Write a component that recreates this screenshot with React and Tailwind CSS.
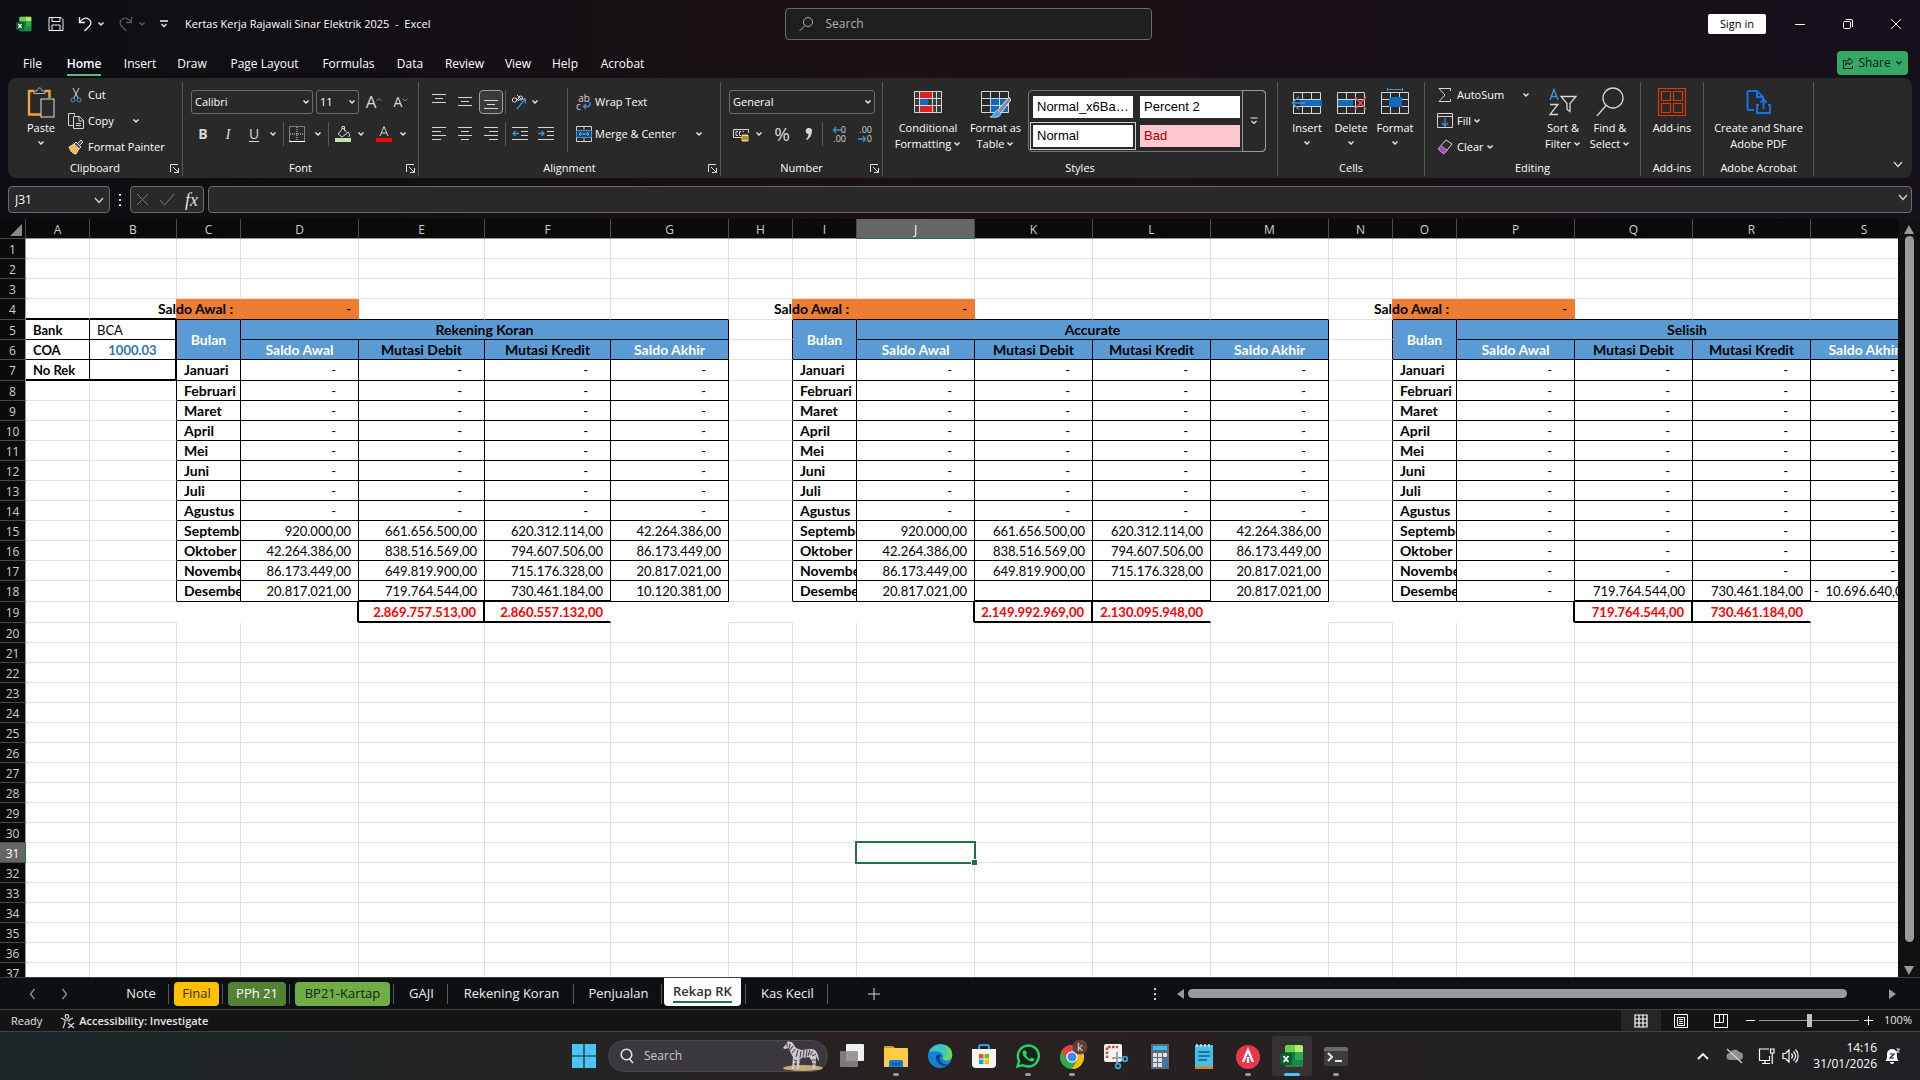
import clsx from "clsx";

const COLUMNS = [
  ["A", "w-[64px]"], ["B", "w-[87px]"], ["C", "w-[64px]"], ["D", "w-[118px]"], ["E", "w-[126px]"],
  ["F", "w-[126px]"], ["G", "w-[118px]"], ["H", "w-[64px]"], ["I", "w-[64px]"], ["J", "w-[118px]"],
  ["K", "w-[118px]"], ["L", "w-[118px]"], ["M", "w-[118px]"], ["N", "w-[64px]"], ["O", "w-[64px]"],
  ["P", "w-[118px]"], ["Q", "w-[118px]"], ["R", "w-[118px]"], ["S", "w-[107px]"],
];

const MONTHS = [
  "Januari", "Februari", "Maret", "April", "Mei", "Juni",
  "Juli", "Agustus", "September", "Oktober", "November", "Desember",
];

const TALL_ROWS = [4, 7, 18, 19];

// start = column index of "Bulan", rows = amounts by sheet row number
const BLOCKS = [
  {
    start: 2,
    title: "Rekening Koran",
    rows: {
      15: ["920.000,00", "661.656.500,00", "620.312.114,00", "42.264.386,00"],
      16: ["42.264.386,00", "838.516.569,00", "794.607.506,00", "86.173.449,00"],
      17: ["86.173.449,00", "649.819.900,00", "715.176.328,00", "20.817.021,00"],
      18: ["20.817.021,00", "719.764.544,00", "730.461.184,00", "10.120.381,00"],
    },
    totals: ["2.869.757.513,00", "2.860.557.132,00"],
  },
  {
    start: 8,
    title: "Accurate",
    rows: {
      15: ["920.000,00", "661.656.500,00", "620.312.114,00", "42.264.386,00"],
      16: ["42.264.386,00", "838.516.569,00", "794.607.506,00", "86.173.449,00"],
      17: ["86.173.449,00", "649.819.900,00", "715.176.328,00", "20.817.021,00"],
      18: ["20.817.021,00", "", "", "20.817.021,00"],
    },
    totals: ["2.149.992.969,00", "2.130.095.948,00"],
  },
  {
    start: 14,
    title: "Selisih",
    rows: {
      18: ["-", "719.764.544,00", "730.461.184,00", "- 10.696.640,00"],
    },
    totals: ["719.764.544,00", "730.461.184,00"],
  },
];

const MENU_TABS = [
  ["File", "w-[43px]"], ["Home", "w-[60px]"], ["Insert", "w-[52px]"], ["Draw", "w-[52px]"],
  ["Page Layout", "w-[93px]"], ["Formulas", "w-[75px]"], ["Data", "w-[48px]"], ["Review", "w-[61px]"],
  ["View", "w-[46px]"], ["Help", "w-[48px]"], ["Acrobat", "w-[67px]"],
];

const SHEET_TABS = [
  { name: "Note", w: "w-[57px]" },
  { name: "Final", w: "w-[54px]", color: "bg-[#ffc000] text-[#3a2c00]" },
  { name: "PPh 21", w: "w-[67px]", color: "bg-[#548235] text-white" },
  { name: "BP21-Kartap", w: "w-[104px]", color: "bg-[#70ad47] text-[#14240a]" },
  { name: "GAJI", w: "w-[54px]" },
  { name: "Rekening Koran", w: "w-[126px]" },
  { name: "Penjualan", w: "w-[88px]" },
  { name: "Rekap RK", w: "w-[84px]", active: true },
  { name: "Kas Kecil", w: "w-[82px]" },
];

/* ---------- small helpers ---------- */

function Svg({ w = 16, h = 16, children, className, ...rest }) {
  return (
    <svg
      width={w}
      height={h}
      viewBox={`0 0 ${w} ${h}`}
      fill="none"
      stroke="#d6d6d6"
      className={clsx("shrink-0", className)}
      aria-hidden="true"
      {...rest}
    >
      {children}
    </svg>
  );
}

function Chevron({ dim, className }) {
  return (
    <Svg w={8} h={6} className={className} stroke={dim ? "#5a5a5a" : "#e6e6e6"} strokeWidth="1.5">
      <path d="M1.5 1.5 4 4l2.500-2.500" />
    </Svg>
  );
}

function BigChevron({ className }) {
  return (
    <Svg w={10} h={7} className={className} stroke="#d6d6d6" strokeWidth="1.3">
      <path d="M1 1l4 4.500L9 1" />
    </Svg>
  );
}

function Divider({ className }) {
  return <span className={clsx("w-px shrink-0 bg-[#5a5a5a]", className)} />;
}

function IconButton({ label, className, children }) {
  return (
    <button type="button" aria-label={label} className={clsx("flex shrink-0 items-center justify-center", className)}>
      {children}
    </button>
  );
}

function Group({ label, width, launcher, children }) {
  return (
    <section className={clsx("mt-1 flex h-[94px] shrink-0 flex-col border-r border-[#565656]", width)}>
      <div className="flex h-[78px]">{children}</div>
      <div className="flex h-4 items-center">
        <span className={clsx("flex-1 whitespace-nowrap text-center", launcher && "pl-4")}>{label}</span>
        {launcher && (
          <IconButton label={`${label} settings`} className="w-4">
            <Svg w={9} h={9} stroke="#e0e0e0">
              <path d="M.5 8V.5H8M3 3l5 5M8.500 4v4.500H4" />
            </Svg>
          </IconButton>
        )}
      </div>
    </section>
  );
}

function BigButton({ icon, lines, chevron, below, width }) {
  const last = lines.length - 1;
  return (
    <button type="button" className={clsx("flex shrink-0 flex-col items-center pt-1", width)}>
      <span className="flex h-8 items-center">{icon}</span>
      <span className="mt-0.5 flex flex-col items-center">
        {lines.map((line, i) => (
          <span key={line} className="flex h-4 items-center gap-0.5 whitespace-nowrap">
            {line}
            {chevron && i === last && <Chevron />}
          </span>
        ))}
      </span>
      {below && <Chevron className="mt-1" />}
    </button>
  );
}

function SmallButton({ icon, label, chevron, far }) {
  return (
    <button type="button" className="flex h-[26px] items-center whitespace-nowrap">
      <span className="flex w-5 justify-center">{icon}</span>
      <span className="pl-0.5">{label}</span>
      {chevron && <Chevron className={far ? "ml-[18px]" : "ml-0.5"} />}
    </button>
  );
}

function Picker({ label, value, width }) {
  return (
    <div className={clsx("relative h-6 shrink-0", width)}>
      <select
        aria-label={label}
        className="h-6 w-full appearance-none rounded-[3px] border border-[#6b6b6b] bg-[#292929] pl-[3px] text-[11px] text-white"
      >
        <option>{value}</option>
      </select>
      <Chevron className="pointer-events-none absolute right-[3px] top-[9px]" />
    </div>
  );
}

/* ---------- title bar and menu ---------- */

function ExcelLogo({ size }) {
  return (
    <svg width={size} height={size} viewBox="0 0 24 24" aria-hidden="true" className="shrink-0">
      <rect x="5" y="1" width="18" height="22" rx="2" fill="#107c41" />
      <path d="M5 8V3a2 2 0 012-2h8v7z" fill="#6fce4f" />
      <path d="M15 1h6a2 2 0 012 2v5h-8z" fill="#b5ea6a" />
      <path d="M15 8h8v8h-8z" fill="#2fa84f" />
      <path d="M5 16h18v5a2 2 0 01-2 2H7a2 2 0 01-2-2z" fill="#1b8a45" />
      <rect x="0" y="9" width="12" height="12" rx="2" fill="#0b5c31" />
      <path d="M3.500 12l5 6M8.500 12l-5 6" stroke="#fff" strokeWidth="1.800" />
    </svg>
  );
}

function TitleBar() {
  return (
    <header className="grid h-12 grid-cols-[1fr_minmax(0,367px)_1fr] items-center pl-4">
      <div className="flex items-center text-white">
        <ExcelLogo size={16} />
        <IconButton label="Save" className="ml-4">
          <Svg stroke="#f0f0f0">
            <path d="M1 1.500h12l2 2v11H1zM4 1.500v4h8v-4M4 14.500V9h8v5.500" />
          </Svg>
        </IconButton>
        <IconButton label="Undo" className="ml-[13px] gap-1">
          <Svg stroke="#f0f0f0" strokeWidth="1.300">
            <path d="M2.500 1v5.500H8M2.800 6.200C5 3 8.500 1.200 11.500 3s3 5 .8 7.200L7.500 15" />
          </Svg>
          <Chevron />
        </IconButton>
        <IconButton label="Redo" className="ml-[13px] gap-1">
          <Svg stroke="#5a5a5a" strokeWidth="1.300">
            <path d="M13.500 1v5.500H8M13.200 6.200C11 3 7.500 1.200 4.500 3s-3 5-.8 7.200L8.500 15" />
          </Svg>
          <Chevron dim />
        </IconButton>
        <IconButton label="Customize Quick Access Toolbar" className="ml-[13px]">
          <Svg w={10} h={8} stroke="#f0f0f0" strokeWidth="1.300">
            <path d="M1 1h8M2.500 4L5 6.500 7.500 4" />
          </Svg>
        </IconButton>
        <h1 className="ml-4 whitespace-pre pt-px text-[11px]">Kertas Kerja Rajawali Sinar Elektrik 2025  -  Excel</h1>
      </div>
      <label className="flex h-8 items-center rounded border border-[#6a6a6a] bg-[#1e1e1e] pl-3">
        <Svg stroke="#b0b0b0">
          <circle cx="10" cy="6" r="4.500" />
          <path d="M7 9.500L1.500 15" />
        </Svg>
        <input
          aria-label="Search"
          placeholder="Search"
          className="ml-3 w-full bg-transparent text-[12px] text-white outline-none placeholder:text-[#b0b0b0]"
        />
      </label>
      <div className="flex items-center justify-end">
        <button type="button" className="h-5 w-[58px] rounded-xs bg-white text-[11px] text-black">
          Sign in
        </button>
        <IconButton label="Minimize" className="ml-[10px] h-8 w-12">
          <Svg w={12} h={12} stroke="#fff"><path d="M1 6.500h10" /></Svg>
        </IconButton>
        <IconButton label="Restore" className="h-8 w-12">
          <Svg w={12} h={12} stroke="#fff">
            <rect x="1.500" y="3.500" width="7" height="7" rx="1" />
            <path d="M3.500 1.500H9a1.500 1.500 0 011.500 1.500v6" />
          </Svg>
        </IconButton>
        <IconButton label="Close" className="h-8 w-12">
          <Svg w={12} h={12} stroke="#fff"><path d="M1 1l10 10M11 1L1 11" /></Svg>
        </IconButton>
      </div>
    </header>
  );
}

function MenuBar() {
  return (
    <nav className="flex h-[30px] items-center pl-[11px] pr-3 text-[12px] text-white">
      {MENU_TABS.map(([name, w]) => (
        <button key={name} type="button" className={clsx("flex h-[30px] shrink-0 justify-center pt-1", w)}>
          <span
            className={clsx(
              "h-6 whitespace-nowrap leading-[24px]",
              name === "Home" && "border-b-2 border-[#5fb88a] font-semibold",
            )}
          >
            {name}
          </span>
        </button>
      ))}
      <button
        type="button"
        className="ml-auto flex h-6 w-[71px] items-center justify-center gap-1 rounded bg-[#35a866] text-[12px] text-[#06190d]"
      >
        <Svg w={12} h={12} stroke="#06190d">
          <path d="M4 3.500H1.500v8h9V9M7 1l4 3.500L7 8V6C5 6 4 7 3.500 8.500 3.500 5 5 3.200 7 3z" />
        </Svg>
        Share
        <Svg w={8} h={6} stroke="#06190d" strokeWidth="1.200"><path d="M1.500 1.500 4 4l2.500-2.500" /></Svg>
      </button>
    </nav>
  );
}

/* ---------- ribbon ---------- */

function AlignIcon({ lines, y = 2 }) {
  return (
    <Svg>
      {lines.map(([x1, x2], i) => (
        <path key={i} d={`M${x1} ${y + i * 4 + 0.5}H${x2}`} />
      ))}
    </Svg>
  );
}

function ClipboardGroup() {
  return (
    <Group label="Clipboard" width="w-[175px]" launcher>
      <BigButton
        width="ml-2 w-[50px]"
        below
        lines={["Paste"]}
        icon={
          <Svg w={28} h={31}>
            <path d="M14 27.500H2V4h5M18 4h4.500v7" stroke="#f2a33a" strokeWidth="2.400" />
            <path d="M7 6.500V4h3c0-4 5-4 5 0h3v2.500z" stroke="#b8b8b8" fill="#292929" />
            <rect x="14" y="12" width="13" height="18" fill="#292929" stroke="#e0e0e0" />
          </Svg>
        }
      />
      <div className="flex flex-col">
        <SmallButton
          label="Cut"
          icon={
            <Svg>
              <path d="M5 1l5 10M11 1L6 11" />
              <circle cx="5" cy="13" r="2" stroke="#3d94d6" />
              <circle cx="11" cy="13" r="2" stroke="#3d94d6" />
            </Svg>
          }
        />
        <SmallButton
          label="Copy"
          chevron
          far
          icon={
            <Svg>
              <path d="M5 12.500H.5V.5h6v2" />
              <path d="M5.500 3.500h6l4 4v8h-10zM11 3.500V8h4.500M8 10.500h5M8 12.500h5" />
            </Svg>
          }
        />
        <SmallButton
          label="Format Painter"
          icon={
            <Svg>
              <path d="M1 8l5-3 5 5-3 5c-3 0-6-3-7-7z" fill="#f0b95a" stroke="#f0d9a8" />
              <path d="M6 5l2-2 5 5-2 2zM10 4l3-3 2 2-3 3" fill="#555" />
            </Svg>
          }
        />
      </div>
    </Group>
  );
}

function FontGroup() {
  return (
    <Group label="Font" width="w-[236px]" launcher>
      <div className="flex flex-col gap-2 pl-2 pt-2">
        <div className="flex items-center gap-[3px]">
          <Picker label="Font" value="Calibri" width="w-[122px]" />
          <Picker label="Font size" value="11" width="w-[43px]" />
          <IconButton label="Increase font size" className="w-6 text-[17px] text-[#d6d6d6]">
            A<Svg w={6} h={10} stroke="#3d94d6"><path d="M.5 4L3 1.500 5.500 4" /></Svg>
          </IconButton>
          <IconButton label="Decrease font size" className="w-6 text-[14px] text-[#d6d6d6]">
            A<Svg w={6} h={10} stroke="#3d94d6"><path d="M.5 1.500L3 4l2.500-2.500" /></Svg>
          </IconButton>
        </div>
        <div className="flex h-6 items-center text-[14px] text-[#d6d6d6]">
          <IconButton label="Bold" className="w-6 font-bold">B</IconButton>
          <IconButton label="Italic" className="w-[26px] font-['Liberation_Serif',serif] text-[15px] italic">I</IconButton>
          <IconButton label="Underline" className="w-[26px] underline underline-offset-2">U</IconButton>
          <Chevron className="mx-0.5" />
          <Divider className="ml-1 h-6" />
          <IconButton label="Borders" className="w-[26px]">
            <Svg>
              <path d="M.5.500h15v15H.5zM8 1v14M1 8h14" strokeDasharray="1 1" />
              <path d="M0 15.500h16" stroke="#fff" />
            </Svg>
          </IconButton>
          <Chevron className="mx-1" />
          <Divider className="ml-0.5 h-6" />
          <IconButton label="Fill color" className="w-[28px]">
            <Svg>
              <path d="M3 8l5-6 4.500 5L7 11zM7 3V.5h2.500V5M13 6c2 2 2 4 .5 5" />
              <path d="M0 12h16v4H0z" fill="#c6e0b4" stroke="none" />
            </Svg>
          </IconButton>
          <Chevron />
          <IconButton label="Font color" className="ml-1 w-[30px]">
            <Svg>
              <path d="M4 10L8 .5 12 10M5.300 7h5.400" />
              <path d="M0 12h16v4H0z" fill="#ff0000" stroke="none" />
            </Svg>
          </IconButton>
          <Chevron />
        </div>
      </div>
    </Group>
  );
}

function WrapIcon() {
  return (
    <span className="flex w-4 shrink-0 flex-col text-[10px] leading-[8px] text-[#d6d6d6]" aria-hidden="true">
      <span>ab</span>
      <span className="flex items-center gap-px">
        c
        <Svg w={9} h={8} stroke="#3d94d6" strokeWidth="1.300">
          <path d="M8 0v2.500C8 4 7 4.500 6 4.500H1.500M4 2L1.500 4.500 4 7" />
        </Svg>
      </span>
    </span>
  );
}

function AlignmentGroup() {
  return (
    <Group label="Alignment" width="w-[302px]" launcher>
      <div className="flex flex-col gap-2 pl-2 pt-2">
        <div className="flex h-6 items-center">
          <IconButton label="Top align" className="w-6"><AlignIcon y={0} lines={[[1, 15], [4, 12], [1, 15]]} /></IconButton>
          <IconButton label="Middle align" className="ml-0.5 w-6"><AlignIcon y={3} lines={[[1, 15], [4, 12], [1, 15]]} /></IconButton>
          <IconButton label="Bottom align" className="ml-0.5 h-6 w-6 rounded border border-[#a0a0a0] bg-[#3a3a3a]">
            <AlignIcon y={6} lines={[[1, 15], [4, 12], [1, 15]]} />
          </IconButton>
          <Divider className="ml-0.5 h-6" />
          <IconButton label="Orientation" className="ml-px w-6">
            <Svg>
              <path d="M6 15L14 5M10 5h4.500v4.500" stroke="#3d94d6" strokeWidth="1.300" />
              <circle cx="3.500" cy="6" r="2.200" />
              <path d="M5 4l3 3M6 1l5 5" />
              <circle cx="9.500" cy="4" r="2" />
            </Svg>
          </IconButton>
          <Chevron />
        </div>
        <div className="flex h-6 items-center">
          <IconButton label="Align left" className="w-6"><AlignIcon lines={[[1, 15], [1, 10], [1, 15], [1, 10]]} y={1} /></IconButton>
          <IconButton label="Center" className="ml-0.5 w-6"><AlignIcon lines={[[1, 15], [4, 12], [1, 15], [4, 12]]} y={1} /></IconButton>
          <IconButton label="Align right" className="ml-0.5 w-6"><AlignIcon lines={[[1, 15], [6, 15], [1, 15], [6, 15]]} y={1} /></IconButton>
          <Divider className="ml-0.5 h-6" />
          <IconButton label="Decrease indent" className="ml-px w-[26px]">
            <Svg>
              <path d="M0 1.500h16M9 5.500h7M9 9.500h7M0 13.500h16" />
              <path d="M7 7.500H1M3.500 5L1 7.500 3.500 10" stroke="#3d94d6" strokeWidth="1.300" />
            </Svg>
          </IconButton>
          <IconButton label="Increase indent" className="w-[26px]">
            <Svg>
              <path d="M0 1.500h16M9 5.500h7M9 9.500h7M0 13.500h16" />
              <path d="M0 7.500h6M3.500 5L6 7.500 3.500 10" stroke="#3d94d6" strokeWidth="1.300" />
            </Svg>
          </IconButton>
        </div>
      </div>
      <Divider className="ml-2 mt-1.5 h-16" />
      <div className="flex flex-col gap-2 pl-2 pt-2">
        <button type="button" className="flex h-6 items-center gap-[3px] whitespace-nowrap">
          <WrapIcon />
          Wrap Text
        </button>
        <button type="button" className="flex h-6 items-center gap-[3px] whitespace-nowrap">
          <Svg>
            <path d="M.5.500h15v15H.5zM8 .5v3M8 12v3.500" />
            <path d="M.5 4.500h15v7H.5z" fill="#1d4468" stroke="#3d94d6" />
            <path d="M3 8h10M5 6L3 8l2 2M11 6l2 2-2 2" stroke="#6db6ee" />
          </Svg>
          Merge &amp; Center
          <Chevron className="ml-4" />
        </button>
      </div>
    </Group>
  );
}

function DecimalIcon({ increase }) {
  const arrow = (
    <Svg w={9} h={8} stroke="#3d94d6" strokeWidth="1.300">
      {increase ? <path d="M9 4H1.500M4 1L1.500 4 4 7" /> : <path d="M0 4h7.500M5 1l2.500 3L5 7" />}
    </Svg>
  );
  return (
    <span className="flex w-[18px] flex-col items-end text-[9px] leading-[9px]" aria-hidden="true">
      <span className="flex items-center">{increase && arrow}{increase ? "0" : ".00"}</span>
      <span className="flex items-center">{!increase && arrow}{increase ? ".00" : "0"}</span>
    </span>
  );
}

function NumberGroup() {
  return (
    <Group label="Number" width="w-[162px]" launcher>
      <div className="flex flex-col gap-2 pl-2 pt-2">
        <Picker label="Number format" value="General" width="w-[146px]" />
        <div className="flex h-6 items-center text-[#d6d6d6]">
          <IconButton label="Accounting format" className="w-6">
            <Svg>
              <path d="M9 11.500H.5v-8h15V7M3 5.500v4M3 5.500h2M3 9.500h2M8 5.500H6.500v4H8M11 5.500H9.500" />
              <path d="M9 9h6v6H9z" fill="#f3d36b" stroke="#f3d36b" />
              <path d="M9 11h6M9 13h6" stroke="#6b5410" />
            </Svg>
          </IconButton>
          <Chevron className="ml-0.5" />
          <IconButton label="Percent style" className="ml-1 w-[30px] text-[19px]">%</IconButton>
          <IconButton label="Comma style" className="w-6">
            <Svg w={8} h={14} stroke="none">
              <path d="M4 1a3 3 0 013 3c0 4-2 7-5 9l-1-1c1.500-1 2.500-3 2.500-5A3 3 0 014 1z" fill="#d6d6d6" />
            </Svg>
          </IconButton>
          <Divider className="ml-px h-6" />
          <IconButton label="Increase decimal" className="w-7"><DecimalIcon increase /></IconButton>
          <IconButton label="Decrease decimal" className="w-6"><DecimalIcon /></IconButton>
        </div>
      </div>
    </Group>
  );
}

function StyleCell({ name, className }) {
  return (
    <button
      type="button"
      className={clsx("h-[22px] w-[100px] pl-1 text-left font-['Liberation_Sans',sans-serif] text-[13px]", className)}
    >
      {name}
    </button>
  );
}

function StylesGroup() {
  return (
    <Group label="Styles" width="w-[395px]">
      <BigButton
        width="ml-2.5 w-[70px]"
        chevron
        lines={["Conditional", "Formatting"]}
        icon={
          <Svg w={28} h={22}>
            <path d="M.5.500h27v21H.5z" fill="#3a3a3a" />
            <path d="M6 1h12v6H6zM6 15h14v6H6z" fill="#e02020" stroke="none" />
            <path d="M6 8h8v6H6z" fill="#0f6cbd" stroke="none" />
            <path d="M.5 7.500h27M.5 14.500h27M5.500 0v22M22.500 0v22M18.500 0v22" />
          </Svg>
        }
      />
      <BigButton
        width="w-[65px]"
        chevron
        lines={["Format as", "Table"]}
        icon={
          <Svg w={30} h={27} className="mt-1">
            <path d="M9 8h18v13H9z" fill="#0f6cbd" stroke="none" />
            <path d="M.5.500h27v21H.5zM.5 7.500h27M.5 14.500h27M9.500 0v22M18.500 0v22" />
            <path d="M28 6L17 19l3 3L30 9z" fill="#8a8a8a" stroke="#e0e0e0" />
            <path d="M17 19c-4 0-3 5-8 7 6 1 11 0 11-4z" fill="#4aa3e8" stroke="#9fd0f5" />
          </Svg>
        }
      />
      <div className="mt-2 flex h-[62px] w-[238px] rounded border border-[#777]">
        <div className="grid flex-1 grid-cols-[106px_100px] content-center items-center gap-x-1 gap-y-px pl-px">
          <span className="flex h-7 items-center justify-center">
            <StyleCell name="Normal_x6Ba…" className="bg-white text-black" />
          </span>
          <StyleCell name="Percent 2" className="bg-white text-black" />
          <span className="flex h-7 items-center justify-center border border-[#d0d0d0] bg-[#292929]">
            <StyleCell name="Normal" className="bg-white text-black" />
          </span>
          <StyleCell name="Bad" className="bg-[#ffc7ce] text-[#9c0006]" />
        </div>
        <IconButton label="More styles" className="-my-px -mr-px w-6 rounded-r border border-[#999]">
          <Svg w={8} h={8} stroke="#f0f0f0" strokeWidth="1.200"><path d="M.5 1h7M1.500 4L4 6.500 6.500 4" /></Svg>
        </IconButton>
      </div>
    </Group>
  );
}

const gridPath = "M2.500 4.500h27v21h-27zM2.500 11.500h27M2.500 18.500h27M11.500 4.500v21M20.500 4.500v21";

function CellsGroup() {
  return (
    <Group label="Cells" width="w-[147px]">
      <BigButton
        width="ml-[7px] w-11"
        below
        lines={["Insert"]}
        icon={
          <Svg w={32} h={28}>
            <path d={gridPath} />
            <path d="M9 12h22v6H9z" fill="#0f6cbd" stroke="none" />
            <path d="M14 15H1.500M8 8.500L1.500 15 8 21.500" stroke="#3d94d6" strokeWidth="1.500" />
          </Svg>
        }
      />
      <BigButton
        width="w-11"
        below
        lines={["Delete"]}
        icon={
          <Svg w={32} h={28}>
            <path d={gridPath} />
            <path d="M3 12h15v6H3z" fill="#0f6cbd" stroke="none" />
            <path d="M20 9l11 12M31 9L20 21" stroke="#e05050" strokeWidth="1.500" />
          </Svg>
        }
      />
      <BigButton
        width="w-11"
        below
        lines={["Format"]}
        icon={
          <Svg w={32} h={28}>
            <path d={gridPath} />
            <path d="M10 9h13v10H10z" fill="#0f6cbd" stroke="none" />
            <path d="M8 1.500h16M8.500 0v3M23.500 0v3" stroke="#3d94d6" />
          </Svg>
        }
      />
    </Group>
  );
}

function EditingGroup() {
  return (
    <Group label="Editing" width="w-[216px]">
      <div className="flex w-[112px] flex-col pl-2.5">
        <SmallButton
          label="AutoSum"
          chevron
          far
          icon={<Svg w={14} h={14}><path d="M12.500 3V.5H1L7 7l-6 6.500h11.500V11" /></Svg>}
        />
        <SmallButton
          label="Fill"
          chevron
          icon={
            <Svg>
              <path d="M.5.500h15v14H.5z" />
              <path d="M.5 3.500h15" />
              <path d="M8 5v8M5 10l3 3 3-3" stroke="#3d94d6" strokeWidth="1.300" />
            </Svg>
          }
        />
        <SmallButton
          label="Clear"
          chevron
          icon={
            <Svg>
              <path d="M1 10l8-9 6 4-8 10z" />
              <path d="M1 10l3-3.500 6 4.500-3 4z" fill="#a445b8" stroke="#c77bd6" />
            </Svg>
          }
        />
      </div>
      <BigButton
        width="w-[52px]"
        chevron
        lines={["Sort &", "Filter"]}
        icon={
          <Svg w={28} h={28}>
            <path d="M1 12L5 1.500 9 12M2.500 8.500h5" stroke="#3d94d6" strokeWidth="1.400" />
            <path d="M1 16.500h8l-8 10h8" strokeWidth="1.300" />
            <path d="M12 8.500h15l-6 7v8l-3-2v-6z" strokeWidth="1.300" />
          </Svg>
        }
      />
      <BigButton
        width="w-[42px]"
        chevron
        lines={["Find &", "Select"]}
        icon={
          <Svg w={28} h={30}>
            <circle cx="17" cy="11" r="10" strokeWidth="1.300" />
            <path d="M10 18.500L1 29" strokeWidth="1.300" />
          </Svg>
        }
      />
    </Group>
  );
}

function Ribbon() {
  return (
    <div className="mx-2 flex h-[100px] overflow-hidden rounded-lg bg-[#292929] text-[11px] leading-4 text-white">
      <ClipboardGroup />
      <FontGroup />
      <AlignmentGroup />
      <NumberGroup />
      <StylesGroup />
      <CellsGroup />
      <EditingGroup />
      <Group label="Add-ins" width="w-[63px]">
        <BigButton
          width="w-[62px]"
          lines={["Add-ins"]}
          icon={
            <Svg w={28} h={28} stroke="#d83b01" strokeWidth="1.200">
              <path d="M.5.500h27v27H.5zM3.500 3.500h9v9h-9zM15.500 3.500h9v9h-9zM3.500 15.500h9v9h-9zM15.500 15.500h9v9h-9z" />
            </Svg>
          }
        />
      </Group>
      <Group label="Adobe Acrobat" width="w-[110px]">
        <BigButton
          width="w-[109px]"
          lines={["Create and Share", "Adobe PDF"]}
          icon={
            <Svg w={26} h={26} stroke="#1473e6" strokeWidth="2">
              <path d="M8 21H3a1.500 1.500 0 01-1.500-1.500v-16A1.500 1.500 0 013 2h8l6 6v4M11 2v6h6" />
              <path d="M13 16h-2v8h13v-8h-2M17.500 20v-9M14.500 13.500l3-3 3 3" />
            </Svg>
          }
        />
      </Group>
      <IconButton label="Collapse ribbon" className="mb-[10px] ml-auto mr-[9px] self-end"><BigChevron /></IconButton>
    </div>
  );
}

function FormulaBar() {
  return (
    <div className="mx-2 mb-[6px] mt-2 flex h-[27px] items-center">
      <div className="relative h-[27px] w-[102px] shrink-0">
        <input
          aria-label="Name box"
          defaultValue="J31"
          className="h-[27px] w-full rounded border border-[#6b6b6b] bg-[#292929] pl-1.5 text-[12px] text-white outline-none"
        />
        <BigChevron className="pointer-events-none absolute right-1.5 top-[11px]" />
      </div>
      <Svg w={4} h={12} stroke="none" className="mx-2">
        <path d="M1 0h2v2H1zM1 5h2v2H1zM1 10h2v2H1z" fill="#d6d6d6" />
      </Svg>
      <div className="flex h-[27px] w-[74px] shrink-0 items-center justify-around rounded border border-[#6b6b6b] bg-[#292929]">
        <IconButton label="Cancel"><Svg w={13} h={13} stroke="#7a7a7a"><path d="M1 1l11 11M12 1L1 12" /></Svg></IconButton>
        <IconButton label="Enter"><Svg w={16} h={13} stroke="#7a7a7a"><path d="M1 7l4.500 5L15 1" /></Svg></IconButton>
        <IconButton label="Insert function" className="font-['Liberation_Serif',serif] text-[18px] italic leading-none text-[#e0e0e0]">
          fx
        </IconButton>
      </div>
      <div className="relative ml-1 h-[27px] flex-1">
        <input
          aria-label="Formula"
          className="h-[27px] w-full rounded border border-[#6b6b6b] bg-[#292929] px-2 text-[12px] text-white outline-none"
        />
        <BigChevron className="pointer-events-none absolute right-1 top-2" />
      </div>
    </div>
  );
}

/* ---------- worksheet ---------- */

const GRID_R = "border-r-[#e1e1e1]";
const GRID_B = "border-b-[#e1e1e1]";
const BLACK = "border-r-black border-b-black";
const LABEL = "text-[14px] font-bold";

// text, extra classes and spans for one cell; null when a merged cell covers it
function getCell(row, col) {
  const base = { text: "", cls: clsx(GRID_R, GRID_B) };

  if (col === 0 || col === 1) {
    const edge = col === 1 ? "border-r-2" : "";
    if (row === 4) {
      return { text: "", cls: clsx("border-b-2 border-b-black", col === 1 ? "border-r-[#ed7d31]" : GRID_R) };
    }
    if (row === 5) {
      return { text: col ? "BCA" : "Bank", cls: clsx(BLACK, edge, "pl-[7px]", !col && "font-bold") };
    }
    if (row === 6) {
      return {
        text: col ? "1000.03" : "COA",
        cls: clsx(BLACK, edge, "font-bold", col ? "text-center text-[#2e75b6]" : "pl-[7px]"),
      };
    }
    if (row === 7) {
      return { text: col ? "" : "No Rek", cls: clsx(BLACK, edge, "border-b-2 pl-[7px] font-bold") };
    }
  }

  // column just before a block closes its left side
  const next = BLOCKS.find((b) => b.start === col + 1);
  if (next) {
    if (row === 4) return { text: "", cls: clsx("border-r-[#ed7d31]", GRID_B) };
    if (row >= 5 && row <= 18) return { text: "", cls: clsx("border-r-black", GRID_B) };
    if (row === 19) return { text: "", cls: clsx("border-r-white", GRID_B) };
  }

  const block = BLOCKS.find((b) => col >= b.start && col <= b.start + 4);
  if (!block) return base;
  const k = col - block.start;

  if (row === 4) {
    if (k === 0) return { text: "Saldo Awal :", overflowLeft: true, cls: clsx(LABEL, "bg-[#ed7d31] border-r-[#ed7d31] border-b-black") };
    if (k === 1) return { text: "-", cls: "bg-[#ed7d31] border-r-[#ed7d31] border-b-black font-bold text-right pr-[7px]" };
    return { text: "", cls: clsx(GRID_R, "border-b-black") };
  }
  if (row === 5) {
    if (k === 0) return { text: "Bulan", rowSpan: 2, cls: clsx(BLACK, LABEL, "bg-[#5b9bd5] text-center text-white") };
    if (k === 1) return { text: block.title, colSpan: 4, cls: clsx(BLACK, LABEL, "bg-[#5b9bd5] text-center") };
    return null;
  }
  if (row === 6) {
    if (k === 0) return null;
    const title = ["Saldo Awal", "Mutasi Debit", "Mutasi Kredit", "Saldo Akhir"][k - 1];
    return { text: title, cls: clsx(BLACK, LABEL, "bg-[#5b9bd5] text-center", (k === 1 || k === 4) && "text-white") };
  }
  if (row >= 7 && row <= 18) {
    const thick = row === 18 && (k === 2 || k === 3) && "border-b-2";
    if (k === 0) return { text: MONTHS[row - 7], cls: clsx(BLACK, LABEL, "pl-[7px]") };
    const text = block.rows[row] ? block.rows[row][k - 1] : "-";
    if (text.startsWith("- ")) {
      return { text: text.slice(2), sign: "-", cls: clsx(BLACK, "pl-[3px] pr-[7px]") };
    }
    return { text, cls: clsx(BLACK, thick, "text-right", text === "-" ? "pr-[22px]" : "pr-[7px]") };
  }
  if (row === 19) {
    if (k === 1) return { text: "", cls: "border-r-2 border-r-black border-b-white" };
    if (k === 2 || k === 3) {
      return {
        text: block.totals[k - 2],
        cls: clsx("border-b-2 border-b-black pr-[7px] text-right font-bold text-[#ff0000]", k === 2 ? "border-r-2 border-r-black" : "border-r-white"),
      };
    }
    return { text: "", cls: "border-r-white border-b-white" };
  }
  return base;
}

function Cell({ row, col }) {
  const cell = getCell(row, col);
  if (!cell) return null;
  const selected = row === 31 && col === 9;
  return (
    <td
      rowSpan={cell.rowSpan}
      colSpan={cell.colSpan}
      className={clsx(
        "whitespace-nowrap border-b border-r border-solid p-0",
        selected ? "relative z-10" : !cell.overflowLeft && "overflow-hidden",
        cell.cls,
      )}
    >
      {cell.overflowLeft && <div className="flex justify-end pr-[7px]">{cell.text}</div>}
      {cell.sign && (
        <div className="flex justify-between">
          <span>{cell.sign}</span>
          <span>{cell.text}</span>
        </div>
      )}
      {!cell.overflowLeft && !cell.sign && cell.text}
      {selected && (
        <div className="absolute -inset-[2px] border-2 border-[#217346]">
          <span className="absolute -bottom-[3px] -right-[3px] h-[6px] w-[6px] border-l border-t border-white bg-[#217346]" />
        </div>
      )}
    </td>
  );
}

function Worksheet() {
  const rows = Array.from({ length: 37 }, (_, i) => i + 1);
  return (
    <div className="flex min-h-0 flex-1 bg-[#111]">
      <div className="min-w-0 flex-1 overflow-hidden bg-white">
        <table className="w-0 table-fixed border-separate border-spacing-0 font-[Lato,sans-serif] text-[13px] leading-[16px] text-black">
          <colgroup>
            <col className="w-[26px]" />
            {COLUMNS.map(([name, w]) => <col key={name} className={w} />)}
          </colgroup>
          <thead className="font-['Open_Sans',sans-serif] text-[12px]">
            <tr className="h-5 bg-[#0a0a0a] text-[#cfcfcf]">
              <td className="border-b border-r border-[#4a4a4a] p-0">
                <Svg w={24} h={18} stroke="none"><path d="M22 4v12H10z" fill="#8a8a8a" /></Svg>
              </td>
              {COLUMNS.map(([name]) => (
                <th
                  key={name}
                  scope="col"
                  className={clsx(
                    "border-b border-r border-r-[#4a4a4a] p-0 pt-0.5 font-normal",
                    name === "J" ? "border-b-[#217346] bg-[#666] text-white" : "border-b-[#9a9a9a]",
                  )}
                >
                  {name}
                </th>
              ))}
            </tr>
          </thead>
          <tbody>
            {rows.map((row) => (
              <tr key={row} className={TALL_ROWS.includes(row) ? "h-[21px]" : "h-5"}>
                <th
                  scope="row"
                  className={clsx(
                    "border-b border-r border-b-[#4a4a4a] p-0 pt-0.5 font-['Open_Sans',sans-serif] text-[12px] font-normal",
                    row === 31 ? "border-r-[#217346] bg-[#666] text-white" : "border-r-[#9a9a9a] bg-[#0a0a0a] text-[#cfcfcf]",
                  )}
                >
                  {row}
                </th>
                {COLUMNS.map(([name], col) => <Cell key={name} row={row} col={col} />)}
              </tr>
            ))}
          </tbody>
        </table>
      </div>
      <div className="flex w-[22px] shrink-0 flex-col items-center pb-0.5 pt-1.5">
        <Svg w={10} h={9} stroke="none"><path d="M5 0l5 9H0z" fill="#9a9a9a" /></Svg>
        <div className="mb-6 mt-0.5 w-[9px] flex-1 rounded-full bg-[#9a9a9a]" />
        <Svg w={10} h={9} stroke="none"><path d="M5 9l5-9H0z" fill="#9a9a9a" /></Svg>
      </div>
    </div>
  );
}

/* ---------- sheet tabs, status bar ---------- */

function SheetTabs() {
  return (
    <div className="flex h-8 shrink-0 border-t border-[#3a3f42] bg-[#0d1013] text-[13px] text-[#f0f0f0]">
      <div className="flex w-[112px] shrink-0 items-center">
        <IconButton label="Previous sheet" className="ml-4 w-8">
          <Svg w={7} h={12} stroke="#8a8a8a" strokeWidth="1.400"><path d="M5.500 1L1.500 6l4 5" /></Svg>
        </IconButton>
        <IconButton label="Next sheet" className="w-8">
          <Svg w={7} h={12} stroke="#8a8a8a" strokeWidth="1.400"><path d="M1.500 1l4 5-4 5" /></Svg>
        </IconButton>
      </div>
      {SHEET_TABS.map((tab) => (
        <div key={tab.name} className={clsx("flex shrink-0 items-start", tab.w)}>
          <button
            type="button"
            className={clsx(
              "flex flex-1 items-center justify-center whitespace-nowrap",
              tab.active
                ? "ml-0.5 mr-1 h-[28px] rounded-b bg-white font-semibold text-[#303030]"
                : "ml-[5px] mr-[3px] mt-1 h-6 rounded",
              tab.color,
            )}
          >
            {tab.active ? <span className="border-b-2 border-[#217346] leading-[20px]">{tab.name}</span> : tab.name}
          </button>
          <Divider className="mt-1.5 h-5" />
        </div>
      ))}
      <IconButton label="New sheet" className="ml-9 w-5">
        <Svg w={12} h={12}><path d="M6 0v12M0 6h12" /></Svg>
      </IconButton>
      <div className="ml-auto flex min-w-0 flex-[0_1_770px] items-center pr-6">
        <Svg w={4} h={12} stroke="none" className="ml-[3px]">
          <path d="M1 0h2v2H1zM1 5h2v2H1zM1 10h2v2H1z" fill="#d6d6d6" />
        </Svg>
        <Svg w={7} h={10} stroke="none" className="ml-5"><path d="M0 5l7-5v10z" fill="#9a9a9a" /></Svg>
        <div className="ml-1 mr-[42px] h-[9px] flex-1 rounded-full bg-[#9a9a9a]" />
        <Svg w={7} h={10} stroke="none"><path d="M7 5L0 0v10z" fill="#9a9a9a" /></Svg>
      </div>
    </div>
  );
}

function StatusBar() {
  return (
    <div className="flex h-[23px] shrink-0 items-center border-b border-t border-[#3f4244] bg-[#141414] text-[11px] text-[#e6e6e6]">
      <span className="ml-[11px] pt-0.5">Ready</span>
      <button type="button" className="ml-[18px] flex items-center gap-1 pt-px font-semibold">
        <Svg w={15} h={15} strokeWidth="1.200">
          <circle cx="7" cy="2.500" r="1.800" />
          <path d="M1 4l4 2v3l-2 5M13 4L9 6v2M5 6h4M8 9l6 5M14 9l-6 5" />
        </Svg>
        Accessibility: Investigate
      </button>
      <IconButton label="Normal view" className="ml-auto h-[21px] w-10 bg-[#262626]">
        <Svg w={14} h={14} stroke="#fff" strokeWidth="1.200"><path d="M1 1h12v12H1zM1 5h12M1 9h12M5 1v12M9 1v12" /></Svg>
      </IconButton>
      <IconButton label="Page layout view" className="h-[21px] w-10">
        <Svg w={14} h={14} stroke="#fff"><path d="M.5.500h13v13H.5zM3.500 3.500h7v8h-7zM5 5.500h4M5 7.500h4M5 9.500h4" /></Svg>
      </IconButton>
      <IconButton label="Page break preview" className="h-[21px] w-10">
        <Svg w={14} h={14} stroke="#fff"><path d="M.5.500h13v13H.5zM.5 8.500h9v-8M5.500.500v8" /></Svg>
      </IconButton>
      <IconButton label="Zoom out" className="w-[18px]"><Svg w={9} h={9} stroke="#fff"><path d="M0 4.500h9" /></Svg></IconButton>
      <input
        type="range"
        aria-label="Zoom"
        defaultValue="50"
        className="mx-0 h-[13px] w-[100px] appearance-none bg-[linear-gradient(#9a9a9a,#9a9a9a)] bg-[length:100%_1px] bg-center bg-no-repeat [&::-webkit-slider-thumb]:h-[13px] [&::-webkit-slider-thumb]:w-[5px] [&::-webkit-slider-thumb]:appearance-none [&::-webkit-slider-thumb]:bg-[#c0c0c0]"
      />
      <IconButton label="Zoom in" className="w-[18px]"><Svg w={9} h={9} stroke="#fff"><path d="M0 4.500h9M4.500 0v9" /></Svg></IconButton>
      <button type="button" className="mr-2 w-[35px] text-right">100%</button>
    </div>
  );
}

/* ---------- taskbar ---------- */

function TaskbarApp({ label, running, active, children }) {
  return (
    <button
      type="button"
      aria-label={label}
      className={clsx(
        "relative mx-0.5 flex h-10 w-10 shrink-0 items-center justify-center rounded",
        active && "bg-white/8",
      )}
    >
      <svg width="24" height="24" viewBox="0 0 24 24" aria-hidden="true" className="overflow-visible">{children}</svg>
      {running && (
        <span className={clsx("absolute bottom-0 h-[3px] rounded-full", active ? "w-4 bg-[#4cc2ff]" : "w-1.5 bg-[#9a9a9a]")} />
      )}
    </button>
  );
}

function Zebra() {
  return (
    <svg width="42" height="30" viewBox="0 0 42 30" aria-hidden="true" className="shrink-0">
      <ellipse cx="22" cy="27" rx="20" ry="3" fill="#c9a878" />
      <path
        d="M2 7l3-4 2-3 2 1 2 0 4 6 5 2 10-1c4 0 6 3 7 6l1 6-1-1-2-4 0 5-1 8h-2l-1-8-3-4-7 1-2 1-1 10h-2l-1-9-2 9h-2l1-12c-2-3-3-6-4-9l-4 1z"
        fill="#cfc8d2"
      />
      <path
        d="M6 2l0 4M9 3l-1 4M12 5l-3 4M14 8l-3 4M17 9l-2 7M20 10l-1 7M23 9l-1 8M26 9l-1 7M29 9l-2 6M32 10l-3 4M35 13l-4 2M13 19l3 1M13 23l3 0M18 19l4 0M18 23l3 0M31 19l4 0M31 23l3 0"
        stroke="#4a4050"
        strokeWidth="1.100"
      />
    </svg>
  );
}

function Taskbar() {
  return (
    <footer className="grid h-12 shrink-0 grid-cols-[1fr_auto_1fr] items-center bg-linear-to-r from-[#1c2629] via-[#28211f] to-[#202124] text-white">
      <span />
      <div className="flex items-center">
        <TaskbarApp label="Start">
          <path d="M0 0h11.400v11.400H0zM12.600 0H24v11.400H12.600zM0 12.600h11.400V24H0zM12.600 12.600H24V24H12.600z" fill="#4cc4f8" />
        </TaskbarApp>
        <label className="mx-0.5 flex h-8 w-[220px] items-center rounded-full border border-[#4d4a4f] bg-[#3b393d] pl-2.5 pr-1">
          <Svg w={15} h={16} stroke="#e6e6e6" strokeWidth="1.500">
            <circle cx="7.500" cy="6.500" r="5.300" />
            <path d="M10.500 11l3.500 4" />
          </Svg>
          <input
            aria-label="Search the web and Windows"
            placeholder="Search"
            className="ml-2.5 w-full min-w-0 bg-transparent text-[12px] outline-none placeholder:text-[#c8c8c8]"
          />
          <Zebra />
        </label>
        <TaskbarApp label="Task view">
          <rect x="6" y="0" width="18" height="17" rx="1" fill="#f0f0f0" />
          <rect x="0" y="7" width="18" height="16" rx="1" fill="#8b8b8b" opacity=".85" />
        </TaskbarApp>
        <TaskbarApp label="File Explorer" running>
          <path d="M0 2h9l3 3H0z" fill="#d89a16" />
          <rect x="0" y="4" width="24" height="19" rx="1" fill="#fccb48" />
          <path d="M5 23v-5a2 2 0 012-2h10a2 2 0 012 2v5z" fill="#1477cf" />
          <path d="M8 20h8" stroke="#0a4f94" strokeWidth="1.500" />
        </TaskbarApp>
        <TaskbarApp label="Edge">
          <circle cx="12" cy="12" r="12" fill="#1580d4" />
          <path d="M1 8C4 1 12-1 17 1c6 2 8 8 7 12-1 3-5 4-8 3-2-1-1-2-1-4 0-4-6-6-14-4z" fill="#3cc6c0" />
          <path d="M17 1c6 2 8 8 7 12-1 3-5 4-8 3-1-.5-1-1.500-.5-2.500C19 13 21 8 17 1z" fill="#66d860" />
          <path d="M8 13c0 5 4 9 9 9 2 0 4-1 5-2-3 1-8 1-10-4-1-2 0-4 1-5-3-1-5 0-5 2z" fill="#0b3f86" />
        </TaskbarApp>
        <TaskbarApp label="Microsoft Store">
          <path d="M7 6V3a2 2 0 012-2h6a2 2 0 012 2v3" fill="none" stroke="#2fa8e8" strokeWidth="2" />
          <path d="M0 5h24v15a4 4 0 01-4 4H4a4 4 0 01-4-4z" fill="#f5f5f5" />
          <path d="M7 10h4.500v4.500H7z" fill="#f25022" />
          <path d="M12.500 10H17v4.500h-4.500z" fill="#7fba00" />
          <path d="M7 15.500h4.500V20H7z" fill="#00a4ef" />
          <path d="M12.500 15.500H17V20h-4.500z" fill="#ffb900" />
        </TaskbarApp>
        <TaskbarApp label="WhatsApp" running>
          <path d="M1.500 22.500l1.600-5.500A10.500 10.500 0 1112 22.500c-2 0-3.500-.5-5-1.300z" fill="#15231c" stroke="#25d366" strokeWidth="2.400" />
          <path d="M8 6.500c-2 1-2 4 1 7s6 5 8.500 3.500c1-.7 1-2 .5-2.300l-2.500-1.200-1.500 1.500c-2-.7-3-2-4-4L11 9.500 10 7c-.3-.7-1-1-2-.5z" fill="#25d366" />
        </TaskbarApp>
        <TaskbarApp label="Chrome" running>
          <circle cx="12" cy="13" r="12" fill="#34a853" />
          <path d="M1.600 7A12 12 0 0122.400 7L12 13z" fill="#ea4335" />
          <path d="M1.600 7l5.400 9 5-3 10-6H12z" fill="#ea4335" />
          <path d="M22.400 7A12 12 0 0112 25l5.500-9V7z" fill="#fbbc04" />
          <circle cx="12" cy="13" r="5.800" fill="#fff" />
          <circle cx="12" cy="13" r="4.500" fill="#4285f4" />
          <circle cx="20" cy="3" r="7.500" fill="#5d4037" />
          <text x="20" y="7" fill="#f0e0d8" fontSize="11" textAnchor="middle">k</text>
        </TaskbarApp>
        <TaskbarApp label="Snipping Tool">
          <rect x="0" y="0" width="18" height="18" rx="2" fill="#f3f3f3" />
          <path d="M3 14V3h11" fill="none" stroke="#d8492a" strokeWidth="2.500" strokeDasharray="2.500 1.500" />
          <path d="M13 8v11M8 14h12" stroke="#9aa4ab" strokeWidth="2" />
          <circle cx="21" cy="15" r="2.300" fill="none" stroke="#3aa7e0" strokeWidth="1.800" />
          <circle cx="14" cy="22" r="2.300" fill="none" stroke="#3aa7e0" strokeWidth="1.800" />
        </TaskbarApp>
        <TaskbarApp label="Calculator">
          <rect x="3" y="0" width="18" height="25" rx="1" fill="#5c6b77" />
          <path d="M5 2h14v4H5z" fill="#3ec0f0" />
          <path d="M5 9h4v4H5zM10 9h4v4h-4zM5 14h4v4H5zM10 14h4v4h-4zM5 19h4v4H5zM10 19h4v4h-4zM15 9h4v4h-4z" fill="#d9e1e6" />
          <path d="M15 14h4v9h-4z" fill="#3a78b8" />
        </TaskbarApp>
        <TaskbarApp label="Notepad">
          <rect x="3" y="1" width="18" height="22" fill="#49bfe6" />
          <path d="M3 22h18v3H3z" fill="#c98a3a" />
          <path d="M6 8h12M6 12h12M6 16h9" stroke="#135f86" strokeWidth="1.500" />
          <path d="M5 0v3M9 0v3M13 0v3M17 0v3" stroke="#c8eefa" strokeWidth="1.500" />
        </TaskbarApp>
        <TaskbarApp label="Accurate" running>
          <circle cx="12" cy="13" r="12" fill="#e8364e" />
          <path d="M7 18l5-12 5 12M12 13v6" fill="none" stroke="#fff" strokeWidth="2.300" />
        </TaskbarApp>
        <TaskbarApp label="Excel" running active>
          <ExcelLogo size={24} />
        </TaskbarApp>
        <TaskbarApp label="Terminal" running>
          <rect x="0" y="3" width="24" height="19" rx="2" fill="#3d3d3f" />
          <path d="M0 7V5a2 2 0 012-2h20a2 2 0 012 2v2z" fill="#6c6c6e" />
          <path d="M4 9l4 4-4 4M11 17h7" fill="none" stroke="#e6e6e6" strokeWidth="2" />
        </TaskbarApp>
      </div>
      <div className="flex items-center justify-end pr-5">
        <IconButton label="Show hidden icons">
          <Svg w={12} h={8} stroke="#fff" strokeWidth="1.800"><path d="M1 7l5-5 5 5" /></Svg>
        </IconButton>
        <Svg w={17} h={16} stroke="none" className="ml-[17px]">
          <path d="M4 12a3.500 3.500 0 010-7 5 5 0 019-1 4 4 0 010 8z" fill="#8f8f8f" />
          <path d="M1 1l15 14" stroke="#d0d0d0" strokeWidth="1.300" />
        </Svg>
        <Svg w={17} h={17} stroke="#fff" className="ml-[15px]" strokeWidth="1.200">
          <path d="M11 1H1.500v11.500h10V8M4 15.500h8M7 12.500v3M12.500 1h3.500v4h-3.500zM14.200 5v11" />
        </Svg>
        <Svg w={17} h={16} stroke="#fff" className="ml-[7px]" strokeWidth="1.200">
          <path d="M1 5.500h2.500L7 2v12l-3.500-3.500H1zM9.500 5.500c1.300 1.500 1.300 3.500 0 5M11.500 3.500c2.500 2.700 2.500 6.300 0 9M13.500 1.500c3.500 3.700 3.500 9.300 0 13" />
        </Svg>
        <time className="ml-3 w-[66px] text-right text-[12px] leading-4">
          14:16
          <br />
          31/01/2026
        </time>
        <Svg w={15} h={16} stroke="none" className="ml-2">
          <path d="M7 1a5 5 0 00-5 5v4l-1.500 3h13L12 10V6a5 5 0 00-5-5zM5 14h4a2 2 0 01-4 0z" fill="#fff" />
          <path d="M5 6h4l-4 4h4" stroke="#222" strokeWidth="1.200" />
          <path d="M11.500 1h3l-3 3h3" stroke="#fff" />
        </Svg>
      </div>
    </footer>
  );
}

export default function App() {
  return (
    <main className="flex h-screen flex-col overflow-hidden bg-[#1a0f14] font-['Open_Sans',sans-serif]">
      <div className="shrink-0 bg-linear-to-r from-[#0c0e13] via-[#1b1015] to-[#15101a]">
        <TitleBar />
        <MenuBar />
        <Ribbon />
        <FormulaBar />
      </div>
      <Worksheet />
      <SheetTabs />
      <StatusBar />
      <Taskbar />
    </main>
  );
}
